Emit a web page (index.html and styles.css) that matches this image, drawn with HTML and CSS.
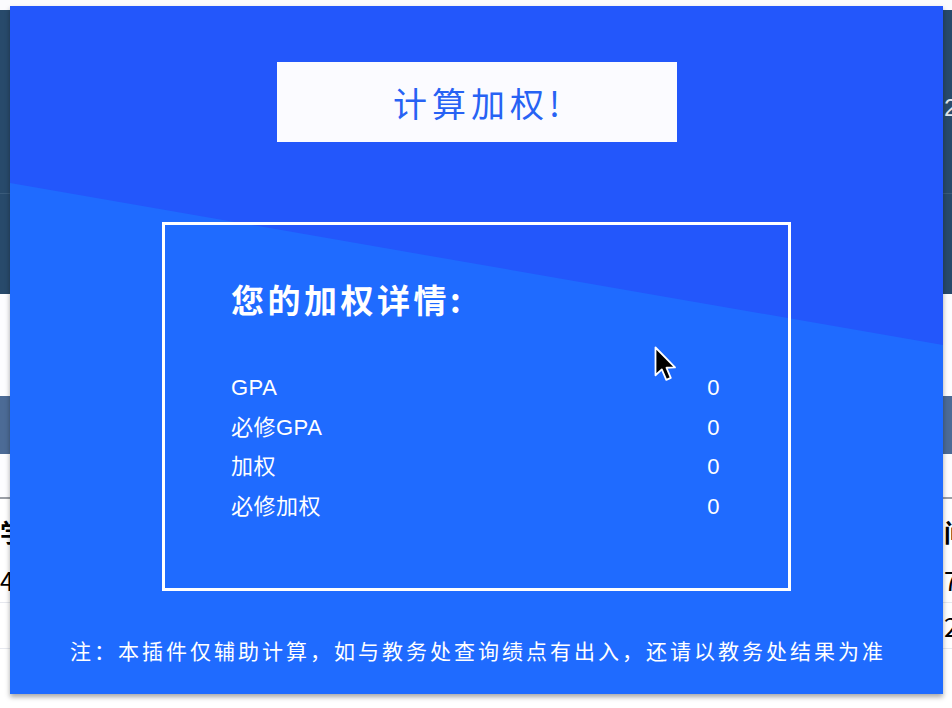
FILE: index.html
```html
<!DOCTYPE html>
<html lang="zh-CN">
<head>
<meta charset="utf-8">
<title>计算加权</title>
<link rel="stylesheet" href="styles.css">
</head>
<body>
<div class="page">
  <div class="topbar"></div>
  <header class="header">
    <div class="nav"><span class="nav-text">2</span></div>
    <div class="subnav"></div>
  </header>
  <div class="spacer"></div>
  <div class="band"></div>
  <div class="spacer2"></div>
  <div class="table">
    <div class="trow thead"><span>学年</span><span class="right">间</span></div>
    <div class="trow"><span>4</span><span class="right">78</span></div>
    <div class="trow"><span></span><span class="right">20</span></div>
  </div>
</div>

<div class="modal">
  <button class="calc-btn">计算加权!</button>
  <section class="details">
    <h2 class="details-title">您的加权详情:</h2>
    <ul class="stats">
      <li><span>GPA</span><span>0</span></li>
      <li><span>必修GPA</span><span>0</span></li>
      <li><span>加权</span><span>0</span></li>
      <li><span>必修加权</span><span>0</span></li>
    </ul>
  </section>
  <p class="note">注：本插件仅辅助计算，如与教务处查询绩点有出入，还请以教务处结果为准</p>
</div>

<svg class="cursor" width="24" height="36" viewBox="0 0 16 24" aria-hidden="true">
  <path d="M1 1 L1 19.5 L5.2 15.6 L8.2 22.6 L11.2 21.3 L8.3 14.5 L14 14.3 Z" fill="#000" stroke="#fff" stroke-width="1.2" stroke-linejoin="round"/>
</svg>
</body>
</html>
```

FILE: styles.css
```css
* { box-sizing: border-box; }

html, body {
  margin: 0;
  padding: 0;
  width: 952px;
  height: 708px;
  overflow: hidden;
  background: #ffffff;
  font-family: "Liberation Sans", "Noto Sans CJK SC", sans-serif;
}

.page {
  display: flex;
  flex-direction: column;
}

.topbar {
  height: 10px;
  background: #fbfbfd;
}

.header {
  height: 284px;
  background: #284a6b;
  display: flex;
  flex-direction: column;
}

.nav {
  height: 184px;
  border-bottom: 1px solid #3a5b7a;
  display: flex;
  justify-content: flex-end;
  padding-top: 84px;
}

.nav-text {
  color: #dfe6ee;
  font-size: 24px;
  width: 8px;
  overflow: hidden;
}

.subnav { flex: 1; }

.spacer {
  height: 102px;
  background: #fdfdff;
}

.band {
  height: 58px;
  background: #4c6b96;
}

.spacer2 {
  height: 45px;
  border-bottom: 2px solid #9b9fa6;
  background: #fdfdff;
}

.table {
  display: flex;
  flex-direction: column;
}

.trow {
  display: flex;
  justify-content: space-between;
  height: 46px;
  align-items: center;
  border-bottom: 1px solid #e6e8ee;
  font-size: 25px;
  color: #000;
  font-family: "Noto Sans CJK SC", sans-serif;
}

.thead {
  height: 58px;
  padding-top: 6px;
  font-weight: 700;
  border-bottom: none;
}

.trow .right {
  width: 8px;
  overflow: hidden;
  white-space: nowrap;
}

/* modal */
.modal {
  position: absolute;
  left: 10px;
  top: 6px;
  width: 933px;
  height: 688px;
  background: #1f6bff;
  box-shadow: 0 3px 5px rgba(0, 0, 0, 0.35);
  display: flex;
  flex-direction: column;
  align-items: center;
  padding-top: 56px;
}

.modal::before {
  content: "";
  position: absolute;
  inset: 0;
  background: #2357fb;
  clip-path: polygon(0 0, 100% 0, 100% 339px, 0 177px);
}

.calc-btn {
  position: relative;
  width: 400px;
  height: 80px;
  border: none;
  background: #fbfbff;
  color: #2762f4;
  font-family: "Noto Sans CJK SC", sans-serif;
  font-weight: 400;
  font-size: 34px;
  letter-spacing: 5px;
  padding: 0 0 0 5px;
  margin: 0;
}

.details {
  position: relative;
  margin-top: 80px;
  width: 629px;
  height: 369px;
  border: 3px solid #ffffff;
  padding: 54px 68px 0 66px;
  color: #fff;
}

.details-title {
  margin: 0;
  font-family: "Noto Sans CJK SC", sans-serif;
  font-weight: 700;
  font-size: 33px;
  line-height: 40px;
  letter-spacing: 3.5px;
}

.stats {
  list-style: none;
  margin: 49px 0 0;
  padding: 0;
  display: flex;
  flex-direction: column;
}

.stats li {
  display: flex;
  justify-content: space-between;
  height: 39.5px;
  line-height: 40px;
  font-size: 22px;
  letter-spacing: 0.5px;
}

.note {
  position: relative;
  margin: 47px 0 0;
  color: #fff;
  font-family: "Noto Sans CJK SC", sans-serif;
  font-size: 21px;
  line-height: 24px;
  letter-spacing: 3px;
  padding-left: 3px;
}

.cursor {
  position: absolute;
  left: 654px;
  top: 346px;
}
```
